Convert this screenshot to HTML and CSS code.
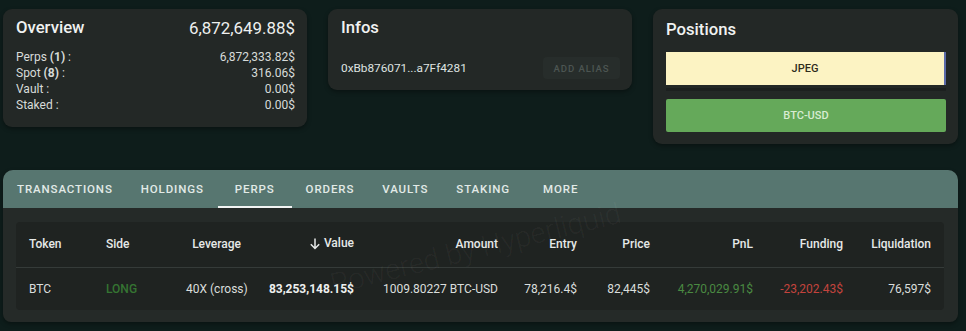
FILE: index.html
```html
<!DOCTYPE html>
<html>
<head>
<meta charset="utf-8">
<link rel="stylesheet" href="styles.css">
</head>
<body>
<div class="page">
  <div class="top-row">
    <section class="card overview">
      <div class="card-head">
        <h2 class="card-title">Overview</h2>
        <span class="total">6,872,649.88$</span>
      </div>
      <div class="kv-list">
        <div class="kv"><span>Perps <b>(1)</b> :</span><span>6,872,333.82$</span></div>
        <div class="kv"><span>Spot <b>(8)</b> :</span><span>316.06$</span></div>
        <div class="kv"><span>Vault :</span><span>0.00$</span></div>
        <div class="kv"><span>Staked :</span><span>0.00$</span></div>
      </div>
    </section>
    <section class="card infos">
      <h2 class="card-title">Infos</h2>
      <div class="info-row">
        <span class="address">0xBb876071...a7Ff4281</span>
        <button class="alias-btn">ADD ALIAS</button>
      </div>
    </section>
    <section class="card positions">
      <h2 class="card-title">Positions</h2>
      <div class="pos-list">
        <div class="pos pos-jpeg">JPEG</div>
        <div class="pos-sep"></div>
        <div class="pos pos-btc">BTC-USD</div>
      </div>
    </section>
  </div>

  <section class="panel">
    <nav class="tabs">
      <span class="tab">TRANSACTIONS</span>
      <span class="tab">HOLDINGS</span>
      <span class="tab active">PERPS</span>
      <span class="tab">ORDERS</span>
      <span class="tab">VAULTS</span>
      <span class="tab">STAKING</span>
      <span class="tab more">MORE</span>
    </nav>
    <div class="panel-body">
      <div class="table-wrap">
        <table class="perps">
          <colgroup>
            <col class="c-token"><col class="c-side"><col class="c-lev"><col class="c-value"><col class="c-amount">
            <col class="c-entry"><col class="c-price"><col class="c-pnl"><col class="c-fund"><col class="c-liq">
          </colgroup>
          <thead>
            <tr>
              <th class="l">Token</th>
              <th class="l">Side</th>
              <th>Leverage</th>
              <th><span class="sort"><svg width="12" height="13" viewBox="0 0 12 13"><path d="M6 1.5v10M1.8 7.3L6 11.5l4.2-4.2" fill="none" stroke="#e6e9e8" stroke-width="1.5"/></svg>Value</span></th>
              <th>Amount</th>
              <th>Entry</th>
              <th>Price</th>
              <th>PnL</th>
              <th>Funding</th>
              <th>Liquidation</th>
            </tr>
          </thead>
          <tbody>
            <tr>
              <td class="l">BTC</td>
              <td class="l long">LONG</td>
              <td>40X (cross)</td>
              <td class="bold">83,253,148.15$</td>
              <td>1009.80227 BTC-USD</td>
              <td>78,216.4$</td>
              <td>82,445$</td>
              <td class="pnl-pos">4,270,029.91$</td>
              <td class="pnl-neg">-23,202.43$</td>
              <td>76,597$</td>
            </tr>
          </tbody>
        </table>
        <div class="watermark">Powered by Hyperliquid</div>
      </div>
    </div>
  </section>
</div>
</body>
</html>
```

FILE: styles.css
```css
* { box-sizing: border-box; }
html, body { margin: 0; padding: 0; }
body {
  background: #0e1d1b;
  font-family: Roboto, "Noto Sans", "Liberation Sans", sans-serif;
  color: #e4e8e6;
  width: 966px;
  height: 331px;
  overflow: hidden;
}
.page { padding: 9px 8px 0 3px; }
.top-row {
  display: flex;
  align-items: flex-start;
  gap: 21px;
}
.card {
  background: #232826;
  border-radius: 9px;
  box-shadow: 0 2px 4px rgba(0,0,0,0.35);
}
.card-title {
  margin: 0;
  font-size: 16.7px;
  font-weight: 500;
  line-height: 22px;
  color: #f0f2f1;
}
.overview { width: 304px; padding: 8px 12px 14px 13px; }
.card-head { display: flex; justify-content: space-between; align-items: center; }
.total { font-size: 16.9px; font-weight: 400; line-height: 22px; color: #eef0ef; }
.kv-list { margin-top: 10px; }
.kv {
  display: flex; justify-content: space-between;
  font-size: 12px; line-height: 16px; color: #d7dbd9;
}
.kv b { font-weight: 700; }

.infos { width: 304px; padding: 8px 12px 11px 13px; }
.info-row {
  margin-top: 18px;
  display: flex; justify-content: space-between; align-items: center;
}
.address { font-size: 11.8px; color: #dfe3e1; }
.alias-btn {
  font-family: inherit;
  border: 0;
  background: #272d2b;
  color: #4c5552;
  font-size: 9.6px;
  font-weight: 500;
  letter-spacing: 0.9px;
  width: 77px;
  height: 22px;
  border-radius: 4px;
  padding: 0;
}

.positions { width: 305px; padding: 10px 12px 12px 13px; }
.pos-list { margin-top: 11px; }
.pos {
  height: 33px;
  display: flex; align-items: center; justify-content: center;
  font-size: 11px; font-weight: 500;
}
.pos-jpeg {
  background: #fcf3c3;
  color: #2f2b1c;
  border-right: 2px solid #5a6aa8;
}
.pos-sep { height: 11px; border-top: 3px solid #1c201f; margin-top: 3px; }
.pos-btc {
  background: #65a95a;
  color: #d8ecd2;
  border-radius: 2px;
}

.panel {
  margin-top: 26px;
  width: 955px;
  background: #252a28;
  border-radius: 10px 10px 8px 8px;
  overflow: hidden;
  box-shadow: 0 2px 4px rgba(0,0,0,0.35);
}
.tabs {
  display: flex;
  height: 38px;
  background: #577670;
  align-items: stretch;
}
.tab {
  display: flex; align-items: center;
  padding: 0 14px;
  font-size: 11.5px;
  font-weight: 500;
  letter-spacing: 0.88px;
  color: #e2eae7;
  position: relative;
}
.tab.active { padding: 0 17px; }
.tab.active::after {
  content: "";
  position: absolute;
  left: 0; right: 0; bottom: 0;
  height: 2px;
  background: #f2f4f3;
}
.tab.more { padding-left: 19px; }
.panel-body { padding: 14px 14px 12px 13px; }
.table-wrap {
  position: relative;
  background: #1f2321;
  border-radius: 4px;
}
.perps {
  width: 928px;
  table-layout: fixed;
  border-collapse: collapse;
  font-size: 12px;
}
.c-token { width: 77px; }
.c-side { width: 80px; }
.c-lev { width: 81px; }
.c-value { width: 113px; }
.c-amount { width: 144px; }
.c-entry { width: 79px; }
.c-price { width: 73px; }
.c-pnl { width: 103px; }
.c-fund { width: 90px; }
.c-liq { width: 88px; }
.perps th, .perps td {
  padding: 0 13px;
  text-align: right;
  white-space: nowrap;
}
.perps th {
  height: 45px;
  font-weight: 500;
  color: #e6e9e8;
  border-bottom: 1px solid #353b39;
}
.perps td { height: 43px; color: #dadedc; }
.perps .l { text-align: left; }
.sort { display: inline-flex; align-items: center; gap: 3px; }
.sort svg { display: block; }
.perps td.long { color: #357532; font-weight: 500; }
.perps td.bold { font-weight: 700; color: #eef0ef; }
.perps td.pnl-pos { color: #4a8a42; }
.perps td.pnl-neg { color: #c4433d; }
.watermark {
  position: absolute;
  left: 319px;
  top: 45px;
  font-size: 29px;
  line-height: 34px;
  font-weight: 300;
  color: rgba(255,255,255,0.045);
  transform: rotate(-14deg);
  transform-origin: left bottom;
  white-space: nowrap;
  pointer-events: none;
}
```
